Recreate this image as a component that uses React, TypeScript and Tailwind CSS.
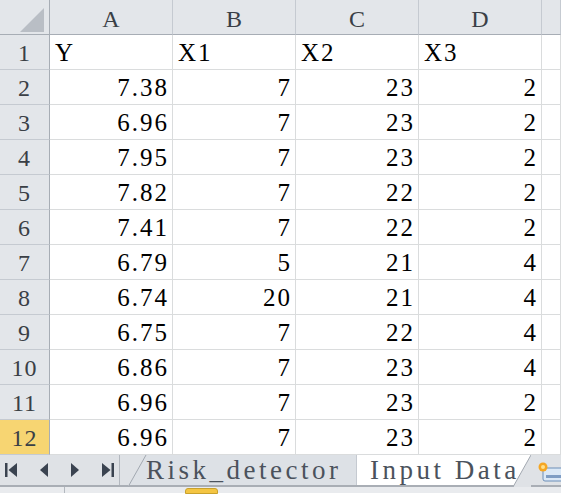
import React from 'react';

const rows: (string | number)[][] = [
  ['7.38', 7, 23, 2],
  ['6.96', 7, 23, 2],
  ['7.95', 7, 23, 2],
  ['7.82', 7, 22, 2],
  ['7.41', 7, 22, 2],
  ['6.79', 5, 21, 4],
  ['6.74', 20, 21, 4],
  ['6.75', 7, 22, 4],
  ['6.86', 7, 23, 4],
  ['6.96', 7, 23, 2],
  ['6.96', 7, 23, 2],
];

const font = { fontFamily: '"Liberation Serif", "Times New Roman", serif' };

const ColHead = ({ label }: { label: string }) => (
  <div className="h-[35px] border-r border-b border-r-[#c5cad1] border-b-[#a7adb5] bg-[#e3e6ea] flex items-center justify-center pt-[4px] text-[24px] text-[#3a3f46] leading-none">
    {label}
  </div>
);

const RowHead = ({ n, active }: { n: number; active?: boolean }) => (
  <div
    className={`h-[35px] border-r border-b border-r-[#a7adb5] border-b-[#c5cad1] flex items-end justify-center pb-[4px] text-[24px] tracking-[1px] leading-none text-[#3a3f46] ${
      active ? 'bg-[#f7d572]' : 'bg-[#e3e6ea]'
    }`}
  >
    {n}
  </div>
);

const Cell = ({ v, left }: { v?: string | number; left?: boolean }) => (
  <div
    className={`h-[35px] border-r border-b border-[#dadcdd] bg-white flex items-end pb-[4px] text-[25px] leading-none text-black ${
      left ? 'justify-start pl-[5px] tracking-[2px]' : 'justify-end pr-[3px] tracking-[2px]'
    }`}
  >
    {v}
  </div>
);

export default function App() {
  return (
    <div className="w-[561px] h-[495px] overflow-hidden bg-white" style={font}>
      <div className="grid grid-cols-[50px_123px_123px_123px_123px_19px]">
        <div className="h-[35px] border-r border-b border-r-[#a7adb5] border-b-[#a7adb5] bg-[#e3e6ea] relative">
          <svg className="absolute left-[20px] top-[8px]" width="24" height="24" viewBox="0 0 24 24">
            <polygon points="24,0 24,24 0,24" fill="#b9bec5" />
          </svg>
        </div>
        {['A', 'B', 'C', 'D', ''].map((c) => (
          <ColHead key={c || 'E'} label={c} />
        ))}

        <RowHead n={1} />
        <Cell v="Y" left />
        <Cell v="X1" left />
        <Cell v="X2" left />
        <Cell v="X3" left />
        <Cell />

        {rows.map((r, i) => (
          <React.Fragment key={i}>
            <RowHead n={i + 2} active={i === 10} />
            {r.map((v, j) => (
              <Cell key={j} v={v} />
            ))}
            <Cell />
          </React.Fragment>
        ))}
      </div>

      {/* sheet tab bar */}
      <div className="h-[32px] flex bg-[#dfe2e6] border-b-2 border-[#a9aeb5]">
        <div className="w-[120px] flex items-center justify-between px-[5px] border-r border-[#b3b8bf] text-[#3a4350]">
          <svg width="13" height="16" viewBox="0 0 13 16">
            <rect x="0" y="1" width="2.5" height="14" fill="currentColor" />
            <polygon points="12,1 12,15 3.5,8" fill="currentColor" />
          </svg>
          <svg width="10" height="16" viewBox="0 0 10 16">
            <polygon points="9,1 9,15 1,8" fill="currentColor" />
          </svg>
          <svg width="10" height="16" viewBox="0 0 10 16">
            <polygon points="1,1 1,15 9,8" fill="currentColor" />
          </svg>
          <svg width="13" height="16" viewBox="0 0 13 16">
            <polygon points="1,1 1,15 9.5,8" fill="currentColor" />
            <rect x="10.5" y="1" width="2.5" height="14" fill="currentColor" />
          </svg>
        </div>
        <div className="relative w-[228px] ml-[8px] flex items-center pl-[18px] text-[27px] tracking-[3.5px] leading-none text-[#4b525c] bg-[#dde1e6]">
          <svg className="absolute left-0 top-0" width="20" height="32" viewBox="0 0 20 32">
            <polygon points="0,32 18,0 0,0" fill="#dfe2e6" />
            <line x1="0" y1="32" x2="18" y2="0" stroke="#a2a8b0" strokeWidth="1" />
          </svg>
          <span className="relative">Risk_detector</span>
        </div>
        <div className="relative w-[175px] flex items-center pl-[13px] text-[27px] tracking-[3.5px] leading-none text-[#4b525c] bg-white border-l border-[#c5cad1]">
          <span>Input Data</span>
          <svg className="absolute right-0 top-0" width="18" height="32" viewBox="0 0 18 32">
            <polygon points="18,0 18,32 0,32" fill="#dfe2e6" />
            <line x1="0" y1="32" x2="18" y2="0" stroke="#a2a8b0" strokeWidth="1" />
          </svg>
        </div>
        <div className="flex-1 relative">
          <svg className="absolute left-[4px] top-[6px]" width="30" height="22" viewBox="0 0 30 22">
            <rect x="8" y="7" width="22" height="13" rx="2" fill="#dbe8f6" stroke="#6d8fb8" />
            <rect x="11" y="14" width="16" height="3" fill="#7f9dc4" />
            <circle cx="8" cy="6" r="4.5" fill="#f5a623" />
            <circle cx="8" cy="6" r="2" fill="#ffe08a" />
          </svg>
        </div>
      </div>
      <div className="h-[6px] bg-[#e9ebee] relative">
        <div className="absolute left-[64px] top-0 h-full w-px bg-[#b3b8bf]" />
        <div className="absolute left-[185px] top-[1px] h-[6px] w-[33px] rounded-t-[3px] bg-[#f4c542] border border-[#c9a12c]" />
      </div>
    </div>
  );
}
